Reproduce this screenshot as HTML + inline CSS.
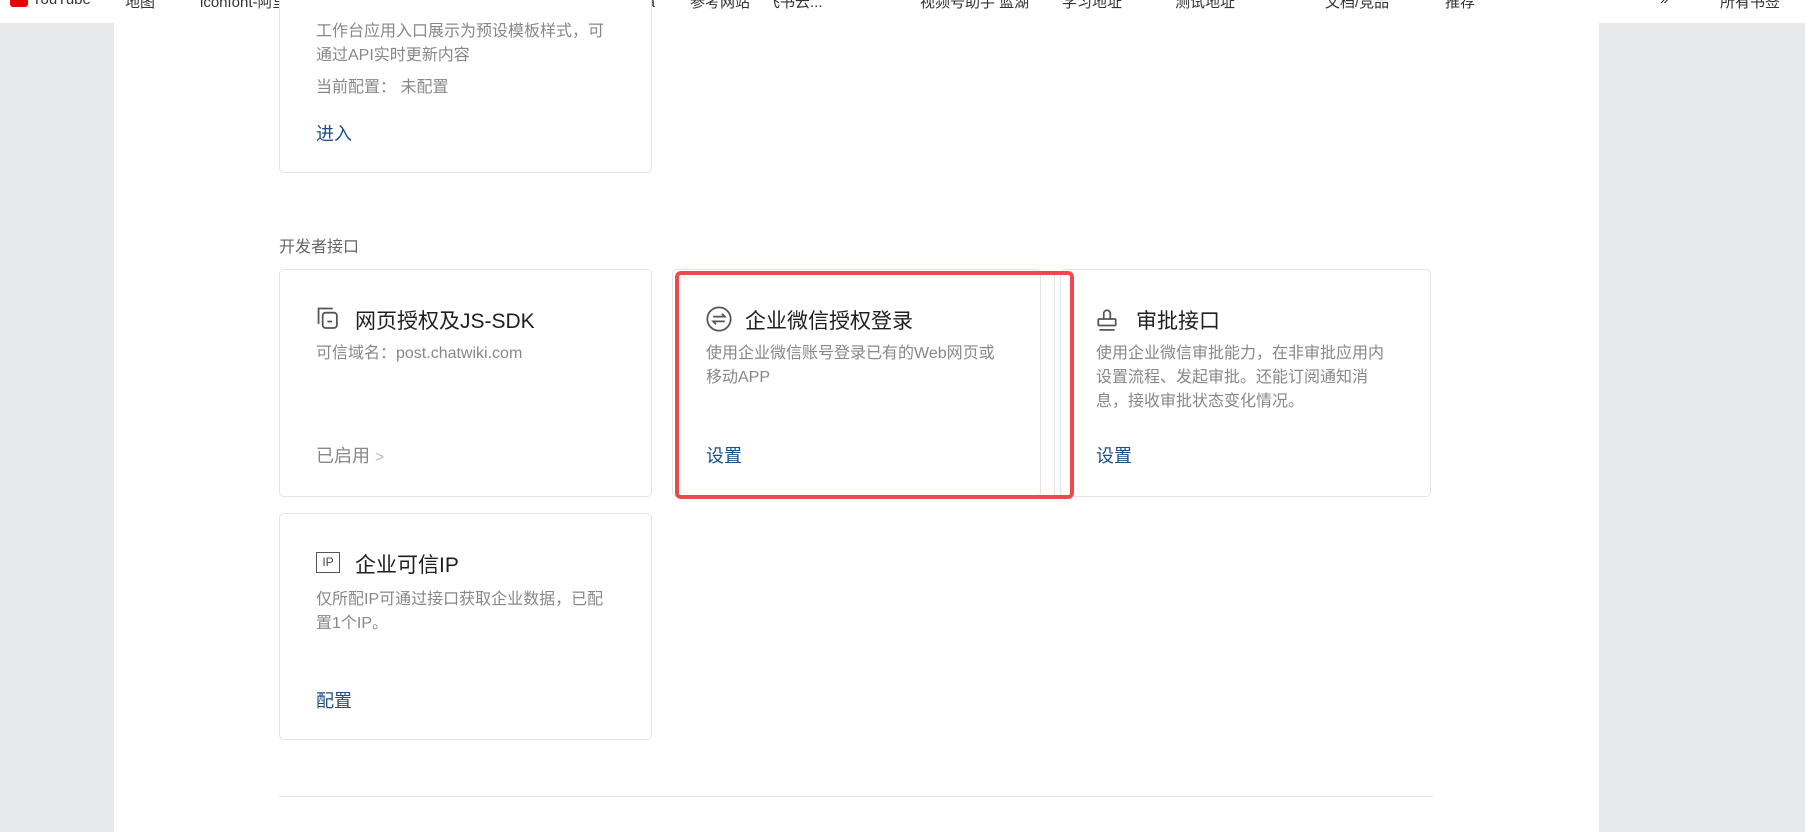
<!DOCTYPE html>
<html><head><meta charset="utf-8">
<style>
*{margin:0;padding:0;box-sizing:border-box}
body{width:1805px;height:832px;overflow:hidden;background:#e8e9eb;font-family:"Liberation Sans","Noto Sans CJK SC",sans-serif;position:relative}
.bar{position:absolute;left:0;top:0;width:1805px;height:23px;background:#fff;overflow:hidden}
.bar span{position:absolute;top:-9px;font-size:15px;color:#333;white-space:nowrap}
.main{position:absolute;left:114px;top:23px;width:1485px;height:809px;background:#fff}
.card{position:absolute;border:1px solid #e3e4e6;border-radius:5px;background:#fff}
.t{position:absolute;font-size:21px;color:#1f1f1f;white-space:nowrap}
.d{position:absolute;font-size:16px;color:#888;line-height:24px}
.l{position:absolute;font-size:18px;color:#1d4e86;white-space:nowrap}
.ic{position:absolute}
</style></head><body>
<div class="bar">
<span style="left:10px"><b style="display:inline-block;width:18px;height:13px;background:#e00;border-radius:3px;vertical-align:middle"></b> YouTube</span>
<span style="left:125px">地图</span>
<span style="left:200px">iconfont-阿里巴巴...</span>
<span style="left:392px">需TAPD平台</span>
<span style="left:525px">新版本日报 · Figma</span>
<span style="left:690px">参考网站　飞书云...</span>
<span style="left:920px">视频号助手 蓝湖</span>
<span style="left:1062px">学习地址</span>
<span style="left:1175px">测试地址</span>
<span style="left:1325px">文档/竞品</span>
<span style="left:1445px">推荐</span>
<span style="left:1660px">»</span>
<span style="left:1720px">所有书签</span>
</div>
<div class="main"></div>

<div class="card" style="left:279px;top:-10px;width:373px;height:183px">
<div class="d" style="left:36px;top:29px;width:310px">工作台应用入口展示为预设模板样式，可<br>通过API实时更新内容</div>
<div class="d" style="left:36px;top:85px">当前配置：&nbsp;未配置</div>
<div class="l" style="left:36px;top:129px">进入</div>
</div>

<div style="position:absolute;left:279px;top:233px;font-size:16px;color:#666">开发者接口</div>

<div class="card" style="left:279px;top:269px;width:373px;height:228px">
<svg class="ic" style="left:35px;top:35px" width="26" height="26" viewBox="0 0 22 22" fill="none" stroke="#555" stroke-width="1.5"><path d="M3 16V3h12"/><rect x="6.5" y="6.5" width="12" height="13" rx="2.5"/><path d="M10.5 14h4"/></svg>
<div class="t" style="left:75px;top:35px">网页授权及JS-SDK</div>
<div class="d" style="left:36px;top:72px">可信域名：post.chatwiki.com</div>
<div class="l" style="left:36px;top:172px;color:#888">已启用 <span style="color:#bbb;font-size:16px">&gt;</span></div>
</div>

<div class="card" style="left:672px;top:269px;width:369px;height:228px">
<svg class="ic" style="left:32px;top:35px" width="28" height="28" viewBox="0 0 24 24" fill="none" stroke="#555" stroke-width="1.5"><circle cx="12" cy="12" r="10"/><path d="M7 10h10l-2.5-2.5M17 14H7l2.5 2.5"/></svg>
<div class="t" style="left:72px;top:35px">企业微信授权登录</div>
<div class="d" style="left:33px;top:72px;width:320px">使用企业微信账号登录已有的Web网页或<br>移动APP</div>
<div class="l" style="left:33px;top:172px">设置</div>
</div>
<div style="position:absolute;left:1054px;top:271px;width:1px;height:226px;background:#e3e4e6"></div>

<div class="card" style="left:1060px;top:269px;width:371px;height:228px">
<svg class="ic" style="left:34px;top:34px" width="24" height="30" viewBox="0 0 22 26" fill="none" stroke="#555" stroke-width="1.6"><path d="M8 13V8a3 3 0 1 1 6 0v5"/><rect x="3" y="13" width="16" height="6" rx="1"/><path d="M4 23h14"/></svg>
<div class="t" style="left:75px;top:35px">审批接口</div>
<div class="d" style="left:35px;top:72px;width:310px">使用企业微信审批能力，在非审批应用内<br>设置流程、发起审批。还能订阅通知消<br>息，接收审批状态变化情况。</div>
<div class="l" style="left:35px;top:172px">设置</div>
</div>

<div style="position:absolute;left:675px;top:271px;width:399px;height:228px;border:4px solid #ee4a4a;border-radius:6px"></div>

<div class="card" style="left:279px;top:513px;width:373px;height:227px">
<div class="ic" style="left:36px;top:38px;width:24px;height:21px;border:1.5px solid #555;font-size:12px;line-height:18px;text-align:center;color:#444">IP</div>
<div class="t" style="left:75px;top:35px">企业可信IP</div>
<div class="d" style="left:36px;top:74px;width:320px">仅所配IP可通过接口获取企业数据，已配<br>置1个IP。</div>
<div class="l" style="left:36px;top:173px">配置</div>
</div>

<div style="position:absolute;left:279px;top:796px;width:1154px;height:1px;background:#e3e4e6"></div>
</body></html>
